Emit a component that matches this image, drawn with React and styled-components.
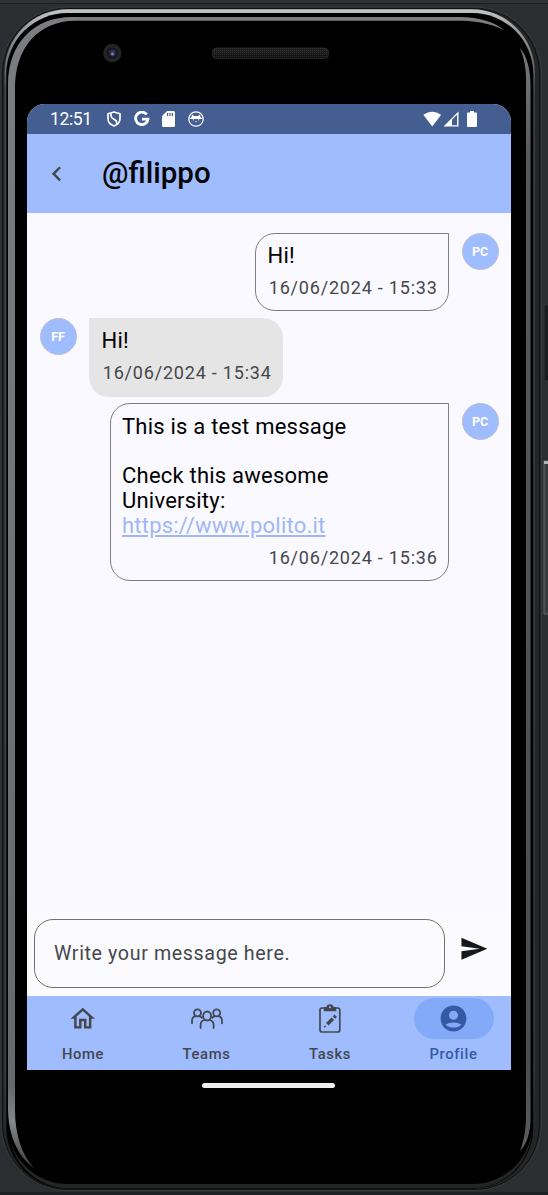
import React from "react";
import styled, { createGlobalStyle } from "styled-components";

const GlobalStyle = createGlobalStyle`
  * { box-sizing: border-box; }
  body {
    margin: 0;
    background: #2c2d31;
    font-family: Roboto, "Liberation Sans", sans-serif;
    overflow: hidden;
  }
`;

const Stage = styled.main`
  position: relative;
  width: 548px;
  height: 1195px;
  padding: 104px 37px 0 27px;
  overflow: hidden;
`;

const CasingArt = styled.svg`
  position: absolute;
  inset: 0;
`;

const Screen = styled.div`
  position: relative;
  display: flex;
  flex-direction: column;
  width: 484px;
  height: 966px;
  border-radius: 18px 18px 0 0;
  overflow: hidden;
  background: #faf9ff;
`;

const StatusBar = styled.div`
  display: flex;
  align-items: center;
  flex: 0 0 30px;
  padding: 0 34px 0 23px;
  background: #455e91;
  color: #fff;
`;

const Clock = styled.span`
  width: 57px;
  font-size: 17.6px;
  line-height: 30px;
  letter-spacing: -0.4px;
`;

const StatusIcons = styled.div`
  display: flex;
  align-items: center;
  gap: ${(p) => p.$gap || 0}px;
  margin-left: ${(p) => (p.$end ? "auto" : 0)};
`;

const BatterySlot = styled.span`
  display: flex;
  margin-left: 7px;
`;

const Header = styled.header`
  display: flex;
  align-items: center;
  flex: 0 0 78.5px;
  padding-left: 15px;
  background: #9fbcff;
`;

const BackButton = styled.button`
  display: flex;
  width: 30px;
  padding: 0;
  border: 0;
  background: none;
  color: #44474e;
`;

const Title = styled.h1`
  margin: 0 0 0 30px;
  font-size: 29.5px;
  font-weight: 500;
  line-height: 40px;
  color: #050505;
`;

const Messages = styled.section`
  display: flex;
  flex-direction: column;
  flex: 1;
  gap: 6.5px;
  padding: 20px 12.5px 0;
`;

const MessageRow = styled.div`
  display: flex;
  align-items: flex-start;
  gap: 12.5px;
  flex-direction: ${(p) => (p.$mine ? "row-reverse" : "row")};
`;

const Avatar = styled.div`
  display: flex;
  align-items: center;
  justify-content: center;
  width: 37px;
  height: 37px;
  border: 1px solid #b9c0d6;
  border-radius: 50%;
  background: #9fbcff;
  color: #fff;
  font-size: 12.5px;
  font-weight: 700;
`;

const Bubble = styled.div`
  width: ${(p) => (p.$wide ? 339.5 : 194)}px;
  padding: ${(p) => (p.$mine ? "10.4px 11.5px 10.7px" : "11.4px 12.5px 11.7px")};
  border: ${(p) => (p.$mine ? "1px solid #7e7f85" : "0")};
  border-radius: ${(p) => (p.$mine ? "20px 0 20px 20px" : "0 20px 20px 20px")};
  background: ${(p) => (p.$mine ? "transparent" : "#e5e5e5")};
`;

const MessageText = styled.p`
  margin: 0;
  font-size: 22px;
  line-height: 24.7px;
  letter-spacing: 0.22px;
  white-space: pre-line;
  color: #000;
`;

const MessageLink = styled.a`
  color: #9fb8f5;
  text-decoration: underline;
`;

const Timestamp = styled.time`
  display: block;
  margin: 7.2px -1.2px 0 0;
  text-align: right;
  font-size: 18px;
  line-height: 24px;
  letter-spacing: 0.8px;
  white-space: nowrap;
  color: #46474c;
`;

const Composer = styled.form`
  display: flex;
  align-items: flex-start;
  flex: 0 0 84px;
  padding: 7px 0 0 7px;
  background: #fbfbfd;
`;

const MessageField = styled.div`
  display: flex;
  align-items: center;
  width: 411px;
  height: 69px;
  padding-left: 19px;
  border: 1px solid #6f7178;
  border-radius: 19px;
  color: #46474e;
  font-size: 19.7px;
  letter-spacing: 0.6px;
`;

const SendButton = styled.button`
  display: flex;
  margin: 14.5px 0 0 14px;
  padding: 0;
  border: 0;
  background: none;
  color: #17181c;
`;

const NavBar = styled.nav`
  display: grid;
  grid-template-columns: repeat(4, 80px);
  gap: 43.5px;
  justify-content: center;
  flex: 0 0 74px;
  padding: 2px 1.5px 0 0;
  background: #9fbcff;
`;

const NavItem = styled.div`
  display: flex;
  flex-direction: column;
  align-items: center;
  color: ${(p) => (p.$active ? "#345aa3" : "#44474e")};
`;

const NavPill = styled.div`
  display: flex;
  align-items: center;
  justify-content: center;
  width: 80px;
  height: 41px;
  border-radius: 21px;
  background: ${(p) => (p.$active ? "#82aaf8" : "transparent")};
`;

const NavLabel = styled.span`
  margin-top: 5px;
  font-size: 14.8px;
  font-weight: 500;
  line-height: 20px;
  letter-spacing: 0.62px;
`;

const GestureHandle = styled.div`
  position: relative;
  width: 133px;
  height: 5px;
  margin: 12.5px 0 0 175px;
  border-radius: 3px;
  background: #f0eef0;
`;

const Casing = () => (
  <CasingArt width="548" height="1195" viewBox="0 0 548 1195">
    <defs>
      <linearGradient id="rim" x1="0" y1="0" x2="0" y2="1">
        <stop offset="0" stopColor="#c4c5c8" />
        <stop offset="0.015" stopColor="#a0a0a3" />
        <stop offset="0.07" stopColor="#444547" />
        <stop offset="0.9" stopColor="#3a3b3c" />
        <stop offset="1" stopColor="#171818" />
      </linearGradient>
      <linearGradient id="shineLeft" x1="0" y1="17" x2="0" y2="1168" gradientUnits="userSpaceOnUse">
        <stop offset="0" stopColor="#7c7d80" />
        <stop offset="0.93" stopColor="#66686c" />
        <stop offset="0.96" stopColor="#85878a" />
        <stop offset="1" stopColor="#3c3d3f" />
      </linearGradient>
      <linearGradient id="shineRight" x1="0" y1="48" x2="0" y2="1151" gradientUnits="userSpaceOnUse">
        <stop offset="0" stopColor="#77787a" />
        <stop offset="0.1" stopColor="#58595a" />
        <stop offset="0.92" stopColor="#4c4d4e" />
        <stop offset="1" stopColor="#5e5f60" />
      </linearGradient>
      <linearGradient id="speakerFade" x1="0" y1="0" x2="0" y2="1">
        <stop offset="0" stopColor="#000" stopOpacity="0.1" />
        <stop offset="1" stopColor="#000" stopOpacity="0.5" />
      </linearGradient>
      <pattern id="mesh" width="2" height="2" patternUnits="userSpaceOnUse">
        <rect width="2" height="2" fill="#222" />
        <rect width="1" height="1" fill="#4b4b4b" />
      </pattern>
    </defs>
    <rect width="548" height="1195" fill="#2c2d31" />
    <rect width="548" height="3" fill="#303135" />
    <rect y="3" width="548" height="1" fill="#1c1d20" />
    <rect y="1192" width="548" height="3" fill="#1f2024" />
    <rect x="544" y="305" width="6" height="76" fill="#1a1b1c" stroke="#39393b" />
    <rect x="544" y="461" width="6" height="153" fill="#3b3c3d" stroke="#65676a" />
    <rect x="544" y="461" width="4" height="3" fill="#b0b1b2" />
    <rect x="1" y="7" width="540.5" height="1183.5" rx="67" fill="#242526" stroke="#3a3b3d" />
    <rect x="2.5" y="8.5" width="537" height="1181" rx="65" fill="none" stroke="#111" />
    <rect x="4.5" y="9.3" width="530.3" height="1179.7" rx="63" fill="url(#rim)" />
    <rect x="6.3" y="13" width="527" height="1175.5" rx="61" fill="#020202" />
    <rect x="9" y="80" width="523" height="1108.3" rx="60" fill="#242625" />
    <rect x="8" y="14" width="524.5" height="1170" rx="60" fill="#000" />
    <path d="M504 30C495 22 480 17.5 460 17H72C35 17 8 42 8 85V1110C9 1140 20 1158 34 1168C22 1155 15 1135 15 1110V88C15 48 38 21 75 20.7H462C480 21 494 25 504 30Z" fill="url(#shineLeft)" />
    <path d="M520 48C527 56 530.5 70 530.5 85V1120C530 1135 526 1145 520 1151C524 1140 526 1130 526 1115V80C526 68 524 58 520 48Z" fill="url(#shineRight)" />
    <circle cx="112.3" cy="53" r="9.2" fill="#242427" />
    <circle cx="112.3" cy="53" r="5.5" fill="#15161f" />
    <circle cx="112.5" cy="53" r="3.4" fill="#2b3156" />
    <circle cx="112.5" cy="54" r="1.4" fill="#7b84a8" />
    <rect x="212.5" y="48" width="116" height="10.5" rx="4" fill="url(#mesh)" />
    <rect x="212.5" y="48" width="116" height="10.5" rx="4" fill="url(#speakerFade)" stroke="#262626" />
  </CasingArt>
);

const ShieldIcon = () => (
  <svg width="14" height="16" viewBox="0 0 14 16" fill="none" stroke="#fff" strokeWidth="1.7" strokeLinejoin="round">
    <path d="M7 1L13 2.8V7.5C13 11 10.5 13.7 7 15C3.5 13.7 1 11 1 7.5V2.8Z" />
    <path d="M3.6 2.2L4.6 6.6L9.2 9.8L10 13" />
  </svg>
);

const GoogleIcon = () => (
  <svg width="16" height="16" viewBox="0 0 16 16" fill="none" stroke="#fff" strokeWidth="2.8">
    <path d="M12.7 3.5A6.2 6.2 0 1 0 14 8.1H8" />
  </svg>
);

const SdCardIcon = () => (
  <svg width="13" height="16" viewBox="0 0 13 16">
    <path d="M5 0H11.5Q13 0 13 1.5V14.5Q13 16 11.5 16H1.5Q0 16 0 14.5V5Z" fill="#fff" />
    <path d="M5.6 2V5M8 2V5M10.4 2V5" stroke="#455e91" strokeWidth="1.2" />
  </svg>
);

const CatIcon = () => (
  <svg width="16" height="16" viewBox="0 0 16 16">
    <circle cx="8" cy="8" r="7.2" fill="none" stroke="#fff" strokeWidth="1.2" />
    <path d="M1 8Q2 6.6 3.6 6.2L3.8 3.4L6.2 5H9.8L12.2 3.4L12.4 6.2Q14 6.6 15 8" fill="#fff" />
    <path d="M4.8 8.8H6M10 8.8H11.2M7.4 10.6H8.6" stroke="#fff" strokeWidth="1" />
  </svg>
);

const WifiIcon = () => (
  <svg width="18.5" height="16" viewBox="0 0 19 16">
    <path d="M.3 3.7Q9.5-2.8 18.7 3.7L9.5 15.6Z" fill="#fff" />
  </svg>
);

const SignalIcon = () => (
  <svg width="16" height="16" viewBox="0 0 16 16">
    <path d="M15.5 .5V15.5H.5Z" fill="#fff" />
    <path d="M9 8.7L14.1 3.7V14.2H9Z" fill="#455e91" />
  </svg>
);

const BatteryIcon = () => (
  <svg width="10" height="16" viewBox="0 0 10 16">
    <path d="M3 0H7V1.4H9Q10 1.4 10 2.4V15Q10 16 9 16H1Q0 16 0 15V2.4Q0 1.4 1 1.4H3Z" fill="#fff" />
  </svg>
);

const MaterialIcon = ({ size = 29.5, d }) => (
  <svg width={size} height={size} viewBox="0 0 24 24" fill="currentColor">
    <path d={d} />
  </svg>
);

const TeamsIcon = () => (
  <svg width="32" height="22" viewBox="0 0 32 22" fill="none" stroke="currentColor" strokeWidth="1.8" strokeLinecap="round">
    <circle cx="6.5" cy="4.9" r="3.5" />
    <circle cx="25.7" cy="4.9" r="3.5" />
    <ellipse cx="16.1" cy="8" rx="4" ry="4.5" />
    <path d="M1 15.3V12.5Q1 9 4.6 8.2M8.5 8.2L11 9.6" />
    <path d="M31 15.3V12.5Q31 9 27.6 8.2M23.7 8.2L21.2 9.6" />
    <path d="M9.6 20V17Q9.6 13 13.4 12M18.8 12Q22.6 13 22.6 17V20" />
  </svg>
);

const TasksIcon = () => (
  <svg width="22" height="29" viewBox="0 0 22 29" fill="none" stroke="currentColor">
    <rect x="1" y="4" width="19.8" height="24" rx="2" strokeWidth="1.7" />
    <path d="M5.5 3.8H8Q8.3 1 11 1T14 3.8H16.5V6.5H5.5Z" strokeWidth="1.5" fill="currentColor" />
    <circle cx="11" cy="3.2" r="1" fill="#9fbcff" stroke="none" />
    <path d="M8.3 20.2L13.8 14.7" strokeWidth="3.6" />
    <path d="M14.9 13.6L16.8 11.7" strokeWidth="3.4" />
    <path d="M5 22.8L6.7 22.3" strokeWidth="1.5" />
  </svg>
);

const HOME = "M12 5.69l5 4.5V18h-2v-6H9v6H7v-7.81l5-4.5M12 3L2 12h3v8h6v-6h2v6h6v-8h3L12 3z";
const PROFILE =
  "M12 2C6.48 2 2 6.48 2 12s4.48 10 10 10 10-4.48 10-10S17.52 2 12 2zm0 4c1.93 0 3.5 1.57 3.5 3.5S13.93 13 12 13s-3.5-1.57-3.5-3.5S10.07 6 12 6zm0 13c-2.03 0-4.43-.5-6.14-2.2C7.55 15.6 9.68 15 12 15s4.45.6 6.14 1.8C16.43 18.5 14.03 19 12 19z";
const BACK = "M15.41 16.59L10.83 12l4.58-4.59L14 6l-6 6 6 6z";
const SEND = "M2.01 21L23 12 2.01 3 2 10l15 2-15 2z";

const NAV = [
  { label: "Home", icon: <MaterialIcon d={HOME} /> },
  { label: "Teams", icon: <TeamsIcon /> },
  { label: "Tasks", icon: <TasksIcon /> },
  { label: "Profile", icon: <MaterialIcon size={31} d={PROFILE} />, active: true },
];

const Message = ({ mine, wide, initials, time, children }) => (
  <MessageRow $mine={mine}>
    <Avatar>{initials}</Avatar>
    <Bubble $mine={mine} $wide={wide}>
      <MessageText>{children}</MessageText>
      <Timestamp>{time}</Timestamp>
    </Bubble>
  </MessageRow>
);

export default function App() {
  return (
    <Stage>
      <GlobalStyle />
      <Casing />
      <Screen>
        <StatusBar>
          <Clock>12:51</Clock>
          <StatusIcons $gap={12.5}>
            <ShieldIcon />
            <GoogleIcon />
            <SdCardIcon />
            <CatIcon />
          </StatusIcons>
          <StatusIcons $end $gap={1.5}>
            <WifiIcon />
            <SignalIcon />
            <BatterySlot>
              <BatteryIcon />
            </BatterySlot>
          </StatusIcons>
        </StatusBar>
        <Header>
          <BackButton aria-label="Back">
            <MaterialIcon d={BACK} />
          </BackButton>
          <Title>@filippo</Title>
        </Header>
        <Messages>
          <Message mine initials="PC" time="16/06/2024 - 15:33">Hi!</Message>
          <Message initials="FF" time="16/06/2024 - 15:34">Hi!</Message>
          <Message mine wide initials="PC" time="16/06/2024 - 15:36">
            {"This is a test message\n\nCheck this awesome\nUniversity:\n"}
            <MessageLink>https://www.polito.it</MessageLink>
          </Message>
        </Messages>
        <Composer>
          <MessageField>Write your message here.</MessageField>
          <SendButton type="button" aria-label="Send">
            <MaterialIcon d={SEND} />
          </SendButton>
        </Composer>
        <NavBar>
          {NAV.map(({ label, icon, active }) => (
            <NavItem key={label} $active={active}>
              <NavPill $active={active}>{icon}</NavPill>
              <NavLabel>{label}</NavLabel>
            </NavItem>
          ))}
        </NavBar>
      </Screen>
      <GestureHandle />
    </Stage>
  );
}
